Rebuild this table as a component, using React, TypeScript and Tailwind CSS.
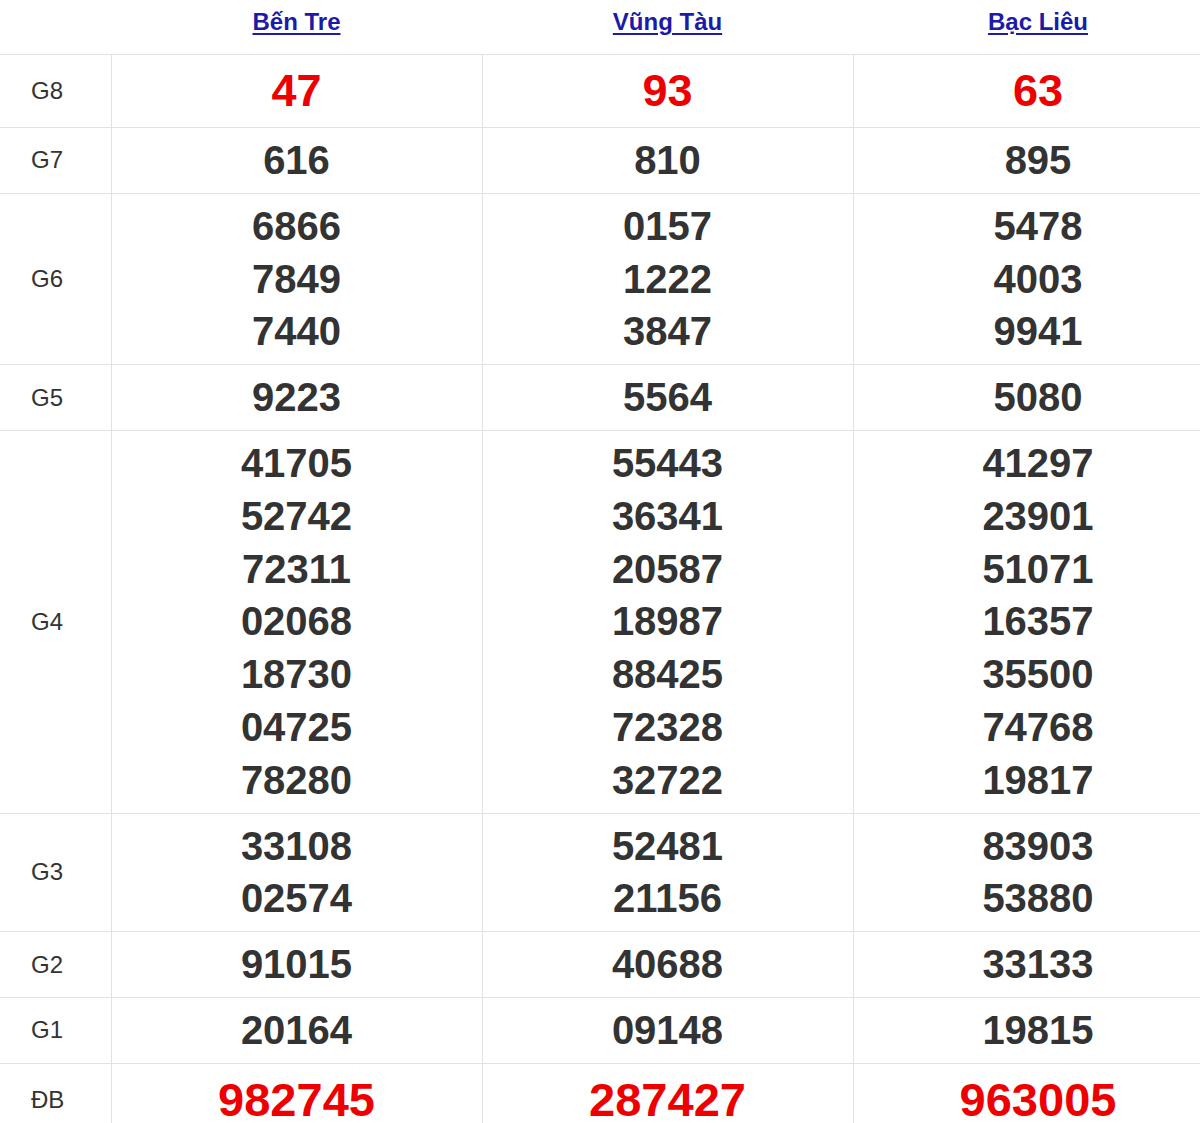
const provinces = ['Bến Tre', 'Vũng Tàu', 'Bạc Liêu']

type Prize = { label: string; values: string[][]; big?: boolean; red?: boolean }

const prizes: Prize[] = [
  { label: 'G8', values: [['47'], ['93'], ['63']], red: true },
  { label: 'G7', values: [['616'], ['810'], ['895']] },
  {
    label: 'G6',
    values: [
      ['6866', '7849', '7440'],
      ['0157', '1222', '3847'],
      ['5478', '4003', '9941'],
    ],
  },
  { label: 'G5', values: [['9223'], ['5564'], ['5080']] },
  {
    label: 'G4',
    values: [
      ['41705', '52742', '72311', '02068', '18730', '04725', '78280'],
      ['55443', '36341', '20587', '18987', '88425', '72328', '32722'],
      ['41297', '23901', '51071', '16357', '35500', '74768', '19817'],
    ],
  },
  {
    label: 'G3',
    values: [
      ['33108', '02574'],
      ['52481', '21156'],
      ['83903', '53880'],
    ],
  },
  { label: 'G2', values: [['91015'], ['40688'], ['33133']] },
  { label: 'G1', values: [['20164'], ['09148'], ['19815']] },
  { label: 'ĐB', values: [['982745'], ['287427'], ['963005']], big: true, red: true },
]

export default function App() {
  return (
    <div className="w-full overflow-hidden bg-white font-['Liberation_Sans',Arial,sans-serif]">
      <table className="w-[1223px] table-fixed border-collapse">
        <colgroup>
          <col className="w-[111px]" />
          <col className="w-[371px]" />
          <col className="w-[371px]" />
          <col className="w-[370px]" />
        </colgroup>
        <thead>
          <tr>
            <th className="p-0" />
            {provinces.map((p) => (
              <th key={p} className="p-0 pb-[10px] text-center align-middle text-[24px] leading-[44px]">
                <a href="#" className="font-bold text-[#1c1aa8] underline underline-offset-[3px]">
                  {p}
                </a>
              </th>
            ))}
          </tr>
        </thead>
        <tbody>
          {prizes.map((row) => (
            <tr key={row.label} className="border-t border-[#e2e2e2]">
              <td className="border-r border-[#e2e2e2] p-0 pl-[31px] align-middle text-[24px] leading-[28px] text-[#333]">
                {row.label}
              </td>
              {row.values.map((nums, i) => (
                <td
                  key={i}
                  className={
                    'border-r border-[#e2e2e2] px-0 py-[6px] text-center align-middle font-bold ' +
                    (row.red ? 'text-[#ee0000] ' : 'text-[#333] ') +
                    (row.big
                      ? 'text-[47px] leading-[60px]'
                      : row.red
                        ? 'text-[45px] leading-[60px]'
                        : 'text-[40px] leading-[52.8px]')
                  }
                >
                  {nums.map((n) => (
                    <div key={n}>{n}</div>
                  ))}
                </td>
              ))}
            </tr>
          ))}
        </tbody>
      </table>
    </div>
  )
}
